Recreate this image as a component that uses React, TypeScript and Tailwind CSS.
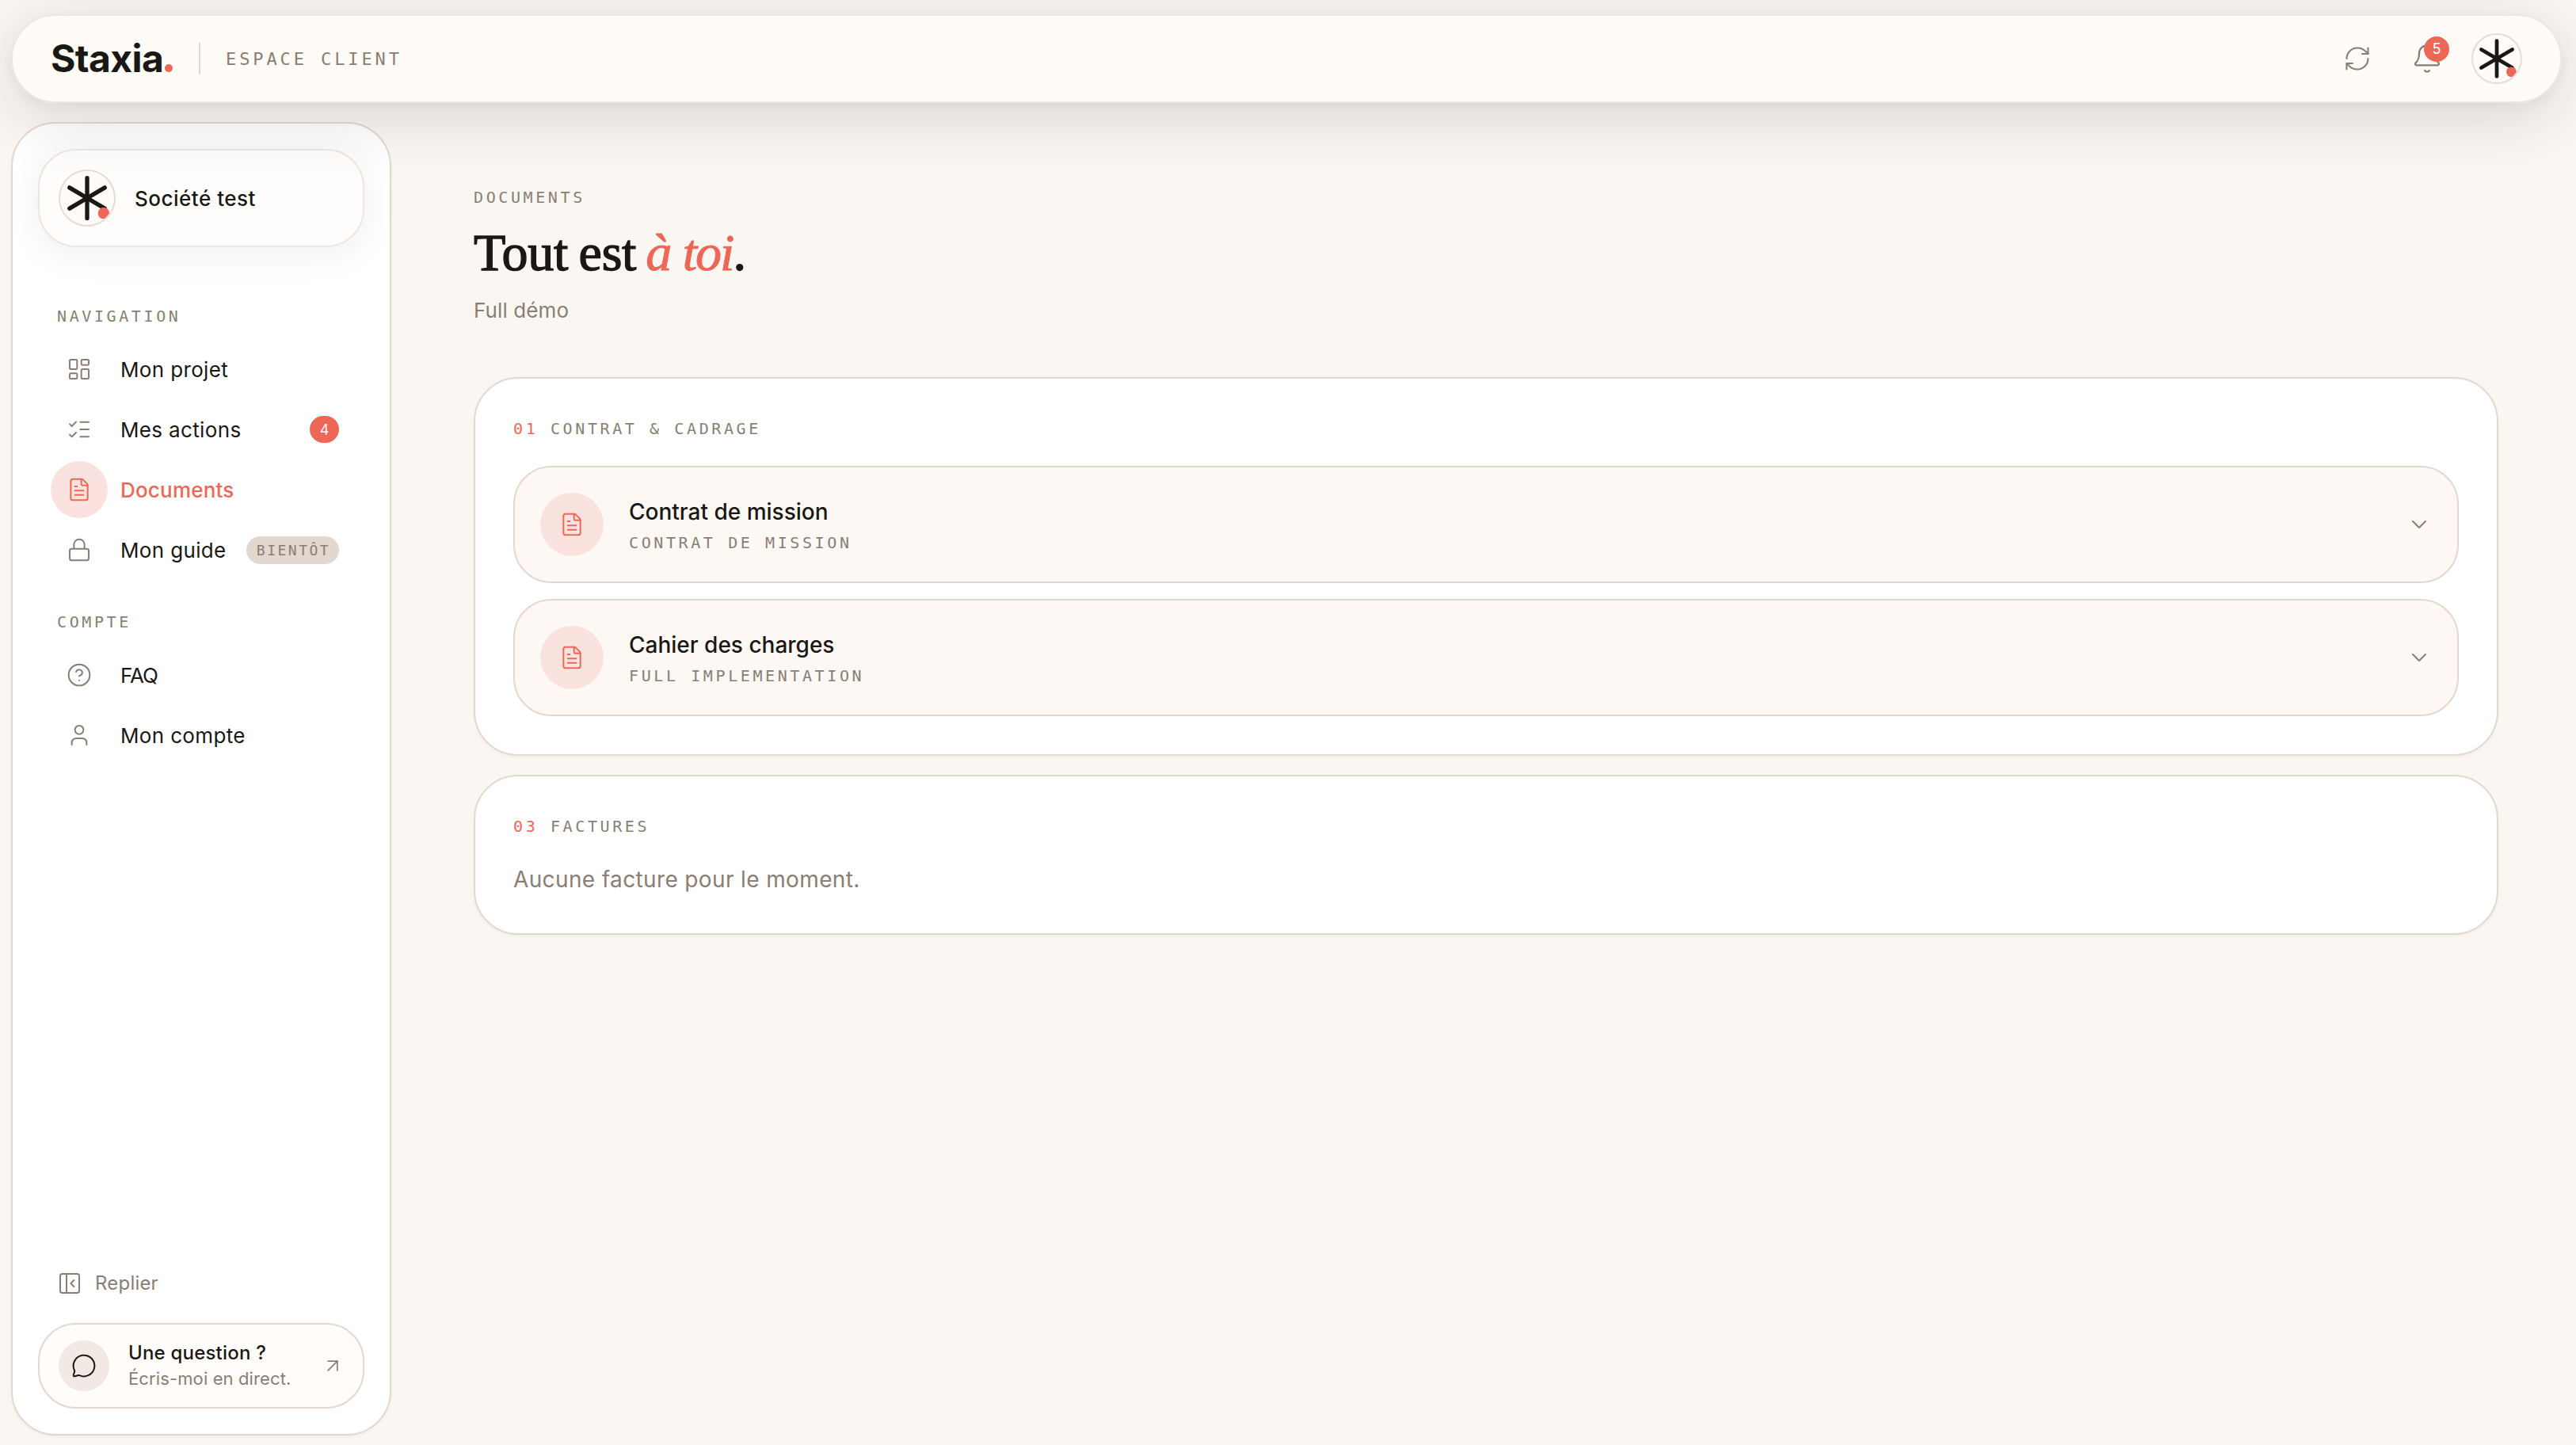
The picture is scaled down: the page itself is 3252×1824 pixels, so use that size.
import type { ReactNode } from 'react';
import {
  ArrowUpRight,
  Bell,
  ChevronDown,
  CircleHelp,
  FileText,
  LayoutDashboard,
  ListChecks,
  Lock,
  MessageCircle,
  PanelLeftClose,
  RefreshCw,
  User,
} from 'lucide-react';
import type { LucideIcon } from 'lucide-react';
import clsx from 'clsx';
import { twMerge } from 'tailwind-merge';

interface NavEntry {
  label: string;
  icon: LucideIcon;
  active?: boolean;
  count?: number;
  soon?: boolean;
}

const mainNav: NavEntry[] = [
  { label: 'Mon projet', icon: LayoutDashboard },
  { label: 'Mes actions', icon: ListChecks, count: 4 },
  { label: 'Documents', icon: FileText, active: true },
  { label: 'Mon guide', icon: Lock, soon: true },
];

const accountNav: NavEntry[] = [
  { label: 'FAQ', icon: CircleHelp },
  { label: 'Mon compte', icon: User },
];

const documents = [
  { title: 'Contrat de mission', kind: 'Contrat de mission' },
  { title: 'Cahier des charges', kind: 'Full implementation' },
];

function MonoLabel({ children, className }: { children: ReactNode; className?: string }) {
  return (
    <div
      className={twMerge(
        "font-['DejaVu_Sans_Mono','Liberation_Mono',monospace] text-[20px] leading-[30px] tracking-[3.6px] whitespace-nowrap text-[#8a7e74] uppercase",
        className,
      )}
    >
      {children}
    </div>
  );
}

function StarLogo({ className }: { className?: string }) {
  return (
    <div className={clsx('shrink-0 overflow-hidden rounded-full border-2 border-[#e6dcd5] bg-[#fffbf9]', className)}>
      <svg viewBox="-30 -30 60 60" className="size-full">
        <g stroke="#1a1814" strokeWidth="4.7" strokeLinecap="round">
          <path d="M0 -22.4V22.4" />
          <path d="M-19.6 -11.6L19.6 11.6" />
          <path d="M19.6 -11.6L-19.6 11.6" />
        </g>
        <circle cx="18.4" cy="16.8" r="6.4" fill="#ed6757" />
      </svg>
    </div>
  );
}

function TopBar() {
  return (
    <header className="relative z-10 mr-[18px] ml-3.5 flex h-28 shrink-0 items-center rounded-full border-2 border-[#efe6e2] bg-linear-to-b from-[#fffaf8] to-[#fffbf7] to-40% px-12 shadow-[0_16px_80px_rgba(26,24,28,0.15),0_4px_16px_rgba(26,24,28,0.04)]">
      <div className="flex items-baseline text-[48px] leading-[60px] font-bold tracking-[-0.6px]">
        <span className="w-36">Staxia</span>
        <span className="mr-px size-[10px] rounded-full bg-[#ed6757]" />
      </div>
      <div className="mx-8 h-10 w-0.5 bg-[#e3d8d0]" />
      <MonoLabel className="text-[22px] tracking-[3.9px]">Espace client</MonoLabel>

      <div className="ml-auto flex items-center">
        <button className="flex size-18 items-center justify-center text-[#8a7e74]">
          <RefreshCw size={36} strokeWidth={1.4} />
        </button>
        <button className="relative ml-4 flex size-18 items-center justify-center text-[#8a7e74]">
          <Bell size={40} strokeWidth={1.4} />
          <span className="absolute top-2 right-2 flex size-8 items-center justify-center rounded-full bg-[#ed6757] text-[18px] leading-none text-white">
            5
          </span>
        </button>
        <StarLogo className="ml-5 size-16" />
      </div>
    </header>
  );
}

function NavItem({ label, icon: Icon, active, count, soon }: NavEntry) {
  return (
    <li className="flex h-18 items-center pr-4">
      <span
        className={clsx(
          'flex size-18 shrink-0 items-center justify-center rounded-full',
          active ? 'bg-[#fae3df] text-[#ed6757]' : 'text-[#8a7e74]',
        )}
      >
        <Icon size={32} strokeWidth={1.5} />
      </span>
      <span
        className={clsx(
          'ml-4 text-[26px] whitespace-nowrap',
          active && 'font-medium tracking-[0.2px] text-[#ed6757]',
          !active && (label === 'FAQ' ? 'tracking-[-1px]' : 'tracking-[0.35px]'),
        )}
      >
        {label}
      </span>
      {count && (
        <span className="ml-auto flex h-[34px] w-[37px] items-center justify-center rounded-full bg-[#ed6757] text-[18px] text-white">
          {count}
        </span>
      )}
      {soon && (
        <span className="ml-auto flex h-[35px] w-[117px] items-center justify-center rounded-full bg-[#e3d7cf] pl-[2px]">
          <MonoLabel className="text-[18px] tracking-[2.5px]">Bientôt</MonoLabel>
        </span>
      )}
    </li>
  );
}

function Sidebar() {
  return (
    <aside className="ml-3.5 flex w-[480px] shrink-0 flex-col rounded-[56px] border-2 border-[#e3d8d0] bg-white p-8 shadow-[0_2px_4px_rgba(26,24,20,0.04)]">
      <div className="flex h-[124px] shrink-0 items-center rounded-[48px] border-2 border-[#efe6e2] bg-[#fffdfb] px-6 shadow-[0_8px_48px_rgba(26,24,28,0.07)]">
        <StarLogo className="size-18" />
        <span className="ml-6 text-[26px] font-medium tracking-[0.5px]">Société test</span>
      </div>

      <MonoLabel className="mt-18 ml-6">Navigation</MonoLabel>
      <ul className="mt-4 flex flex-col gap-1 px-4">
        {mainNav.map((entry) => (
          <NavItem key={entry.label} {...entry} />
        ))}
      </ul>

      <MonoLabel className="mt-10 ml-6">Compte</MonoLabel>
      <ul className="mt-4 flex flex-col gap-1 px-4">
        {accountNav.map((entry) => (
          <NavItem key={entry.label} {...entry} />
        ))}
      </ul>

      <button className="mt-auto mb-[22px] ml-6 flex h-14 items-center gap-4 text-[24px] tracking-[0.2px] text-[#8a7e74]">
        <PanelLeftClose size={32} strokeWidth={1.5} />
        Replier
      </button>

      <a className="flex h-[108px] shrink-0 items-center rounded-[48px] border-2 border-[#e3d8d0] bg-[#fffcf9] px-6">
        <span className="flex size-16 items-center justify-center rounded-full bg-[#f2e9e5]">
          <MessageCircle size={32} strokeWidth={1.5} />
        </span>
        <span className="ml-6 flex flex-col leading-[33px] whitespace-nowrap">
          <span className="text-[24px] font-medium tracking-[0.2px]">Une question ?</span>
          <span className="text-[22px] tracking-[0.12px] text-[#8a7e74]">Écris-moi en direct.</span>
        </span>
        <ArrowUpRight size={28} strokeWidth={1.5} className="ml-auto text-[#8a7e74]" />
      </a>
    </aside>
  );
}

function Section({ num, title, children }: { num: string; title: string; children: ReactNode }) {
  return (
    <section className="rounded-[56px] border-2 border-[#e3d8d0] bg-white p-12 shadow-[0_2px_4px_rgba(26,24,20,0.04)]">
      <MonoLabel className="mb-8">
        <span className="text-[#ed6757]">{num}</span> {title}
      </MonoLabel>
      {children}
    </section>
  );
}

function DocumentRow({ title, kind }: { title: string; kind: string }) {
  return (
    <div className="flex h-[148px] items-center rounded-[48px] border-2 border-[#e3d8d0] bg-[#fdf8f4] px-8">
      <span className="flex size-20 items-center justify-center rounded-full bg-[#fae3df] text-[#ed6757]">
        <FileText size={32} strokeWidth={1.5} />
      </span>
      <div className="ml-8 pt-px">
        <div className="text-[28px] leading-[45px] font-medium">{title}</div>
        <MonoLabel className="leading-[33px]">{kind}</MonoLabel>
      </div>
      <ChevronDown size={32} strokeWidth={1.5} className="ml-auto text-[#8a7e74]" />
    </div>
  );
}

export default function App() {
  return (
    <div className="flex h-[1824px] flex-col gap-6 overflow-hidden bg-[#faf7f2] pt-[18px] pb-3 font-['Inter','Liberation_Sans',sans-serif] text-[#1a1814] antialiased">
      <TopBar />
      <div className="flex min-h-0 flex-1">
        <Sidebar />
        <main className="flex-1 pt-20 pr-[98px] pl-[104px]">
          <MonoLabel>Documents</MonoLabel>
          <h1 className="mt-[19px] font-['Liberation_Serif',serif] text-[66px] leading-[72px] tracking-[-0.2px] [-webkit-text-stroke:1.4px] [word-spacing:-3px]">
            Tout est
            <em className="ml-3 tracking-[-2px] text-[#ed6757] [word-spacing:1px] [-webkit-text-stroke:1px]">à toi</em>.
          </h1>
          <p className="mt-[17px] text-[26px] leading-10 tracking-[0.1px] text-[#8a7e74]">Full démo</p>

          <div className="mt-16 flex flex-col gap-6">
            <Section num="01" title="Contrat & cadrage">
              <div className="flex flex-col gap-5">
                {documents.map((doc) => (
                  <DocumentRow key={doc.title} {...doc} />
                ))}
              </div>
            </Section>
            <Section num="03" title="Factures">
              <p className="text-[28px] leading-10 tracking-[0.37px] text-[#8a7e74]">Aucune facture pour le moment.</p>
            </Section>
          </div>
        </main>
      </div>
    </div>
  );
}
